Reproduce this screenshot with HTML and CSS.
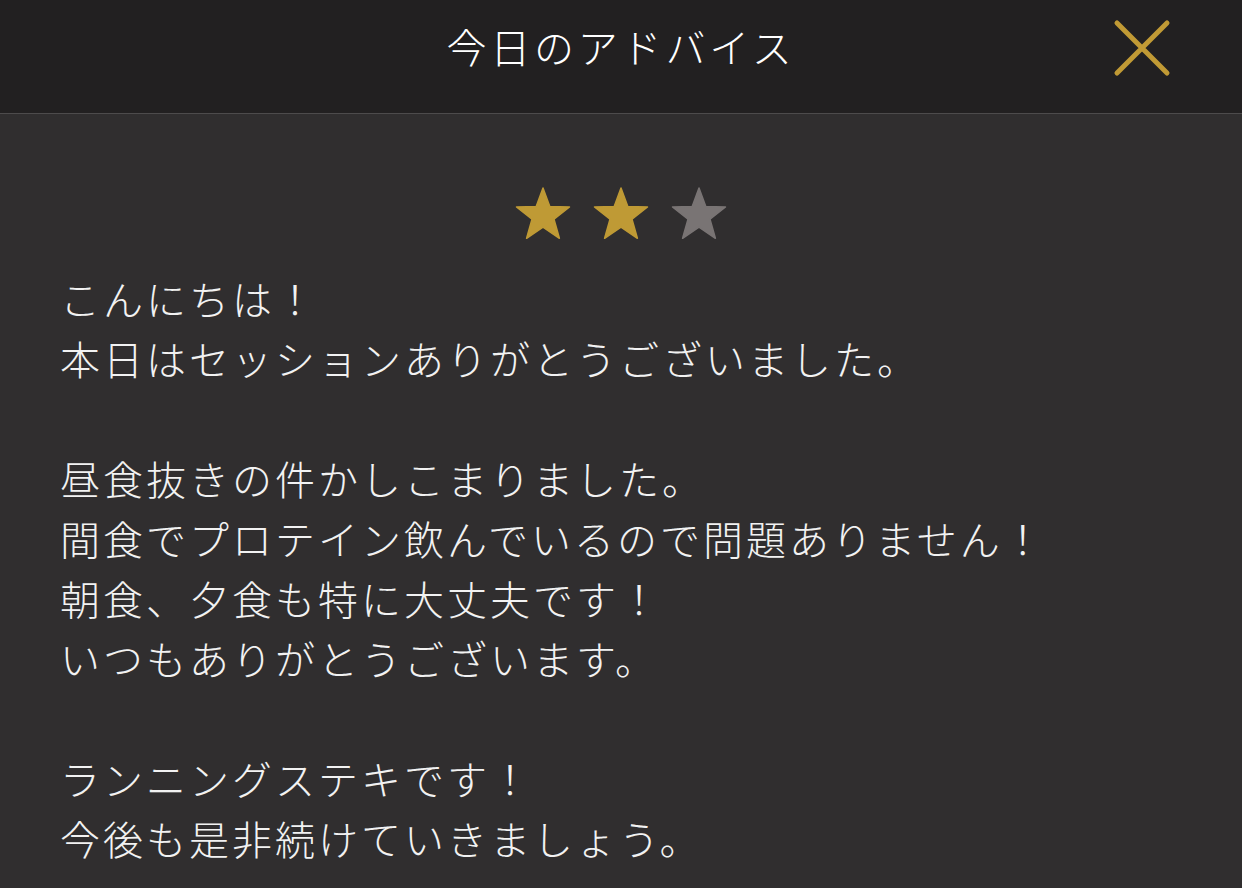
FILE: index.html
```html
<!DOCTYPE html>
<html lang="ja">
<head>
<meta charset="utf-8">
<title>今日のアドバイス</title>
<link rel="stylesheet" href="styles.css">
</head>
<body>
<header class="header">
  <div class="header-side"></div>
  <h1 class="title">今日のアドバイス</h1>
  <div class="header-side header-right">
    <button class="close" aria-label="閉じる">
      <svg width="60" height="60" viewBox="0 0 60 60">
        <path d="M5 5 L55 55 M55 5 L5 55" stroke="#c19a35" stroke-width="5" stroke-linecap="round" fill="none"/>
      </svg>
    </button>
  </div>
</header>
<main class="content">
  <div class="stars">
    <svg class="star" width="58" height="56" viewBox="0 0 58 56"><polygon points="29,2 35.8,20.5 55.5,21 40,33.2 45.4,52.3 29,41.2 12.6,52.3 18,33.2 2.5,21 22.2,20.5" fill="#bf9a35" stroke="#bf9a35" stroke-width="1.5" stroke-linejoin="round"/></svg>
    <svg class="star" width="58" height="56" viewBox="0 0 58 56"><polygon points="29,2 35.8,20.5 55.5,21 40,33.2 45.4,52.3 29,41.2 12.6,52.3 18,33.2 2.5,21 22.2,20.5" fill="#bf9a35" stroke="#bf9a35" stroke-width="1.5" stroke-linejoin="round"/></svg>
    <svg class="star" width="58" height="56" viewBox="0 0 58 56"><polygon points="29,2 35.8,20.5 55.5,21 40,33.2 45.4,52.3 29,41.2 12.6,52.3 18,33.2 2.5,21 22.2,20.5" fill="#797474" stroke="#797474" stroke-width="1.5" stroke-linejoin="round"/></svg>
  </div>
  <div class="message">
    <p class="para">こんにちは！<br>本日はセッションありがとうございました。</p>
    <p class="para">昼食抜きの件かしこまりました。<br>間食でプロテイン飲んでいるので問題ありません！<br>朝食、夕食も特に大丈夫です！<br>いつもありがとうございます。</p>
    <p class="para">ランニングステキです！<br>今後も是非続けていきましょう。</p>
  </div>
</main>
</body>
</html>
```

FILE: styles.css
```css
html, body {
  margin: 0;
  padding: 0;
  background: #302e2f;
  height: 100%;
}
body {
  font-family: "Noto Sans CJK JP", "Noto Sans", sans-serif;
  font-weight: 300;
  color: #f2f2f2;
  overflow: hidden;
}
.header {
  box-sizing: border-box;
  height: 114px;
  background: #222021;
  border-bottom: 1px solid #4d4b4c;
  display: grid;
  grid-template-columns: 1fr auto 1fr;
  align-items: start;
  padding-top: 18px;
}
.title {
  margin: 0;
  font-size: 40px;
  line-height: 56px;
  font-weight: 300;
  letter-spacing: 3.8px;
  color: #ffffff;
}
.header-right {
  display: flex;
  justify-content: flex-end;
  padding-right: 70px;
}
.close {
  background: none;
  border: none;
  padding: 0;
  margin-top: 0;
  width: 60px;
  height: 60px;
  cursor: pointer;
}
.close svg { display: block; }
.content {
  padding: 72px 60px 0;
}
.stars {
  display: flex;
  justify-content: center;
  gap: 20px;
  height: 56px;
}
.star { display: block; }
.message {
  margin-top: 26px;
}
.para {
  margin: 0 0 60px;
  font-size: 40px;
  line-height: 60px;
  letter-spacing: 3px;
  white-space: nowrap;
}
```
